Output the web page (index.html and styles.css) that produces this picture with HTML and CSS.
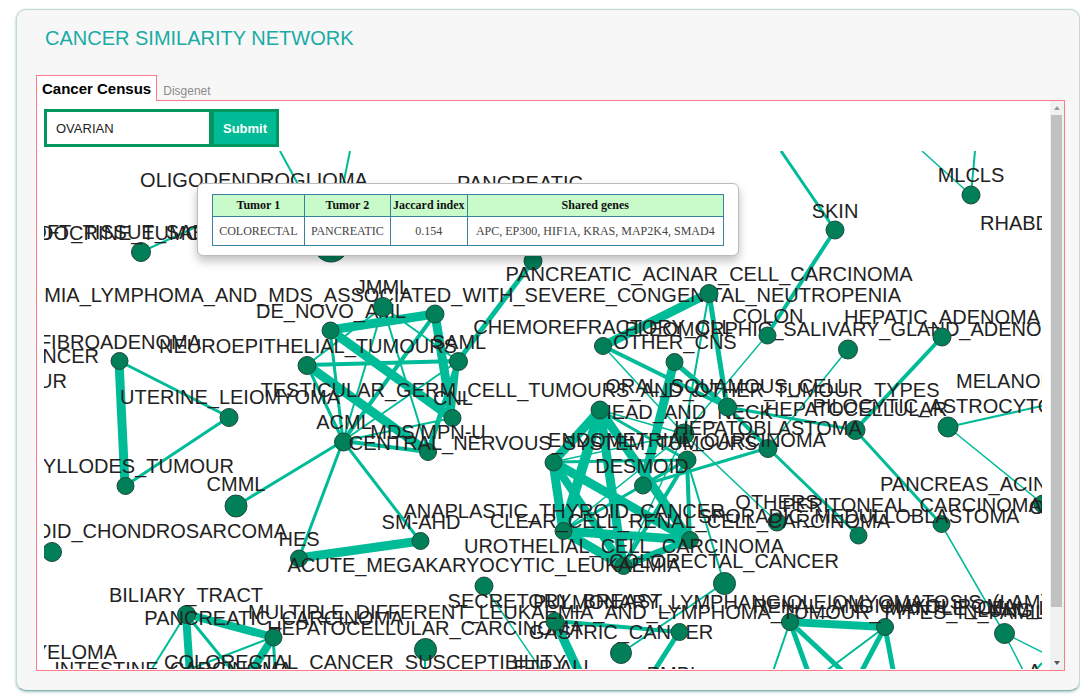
FILE: index.html
```html
<!DOCTYPE html>
<html lang="en">
<head>
    <meta charset="UTF-8">
    <meta name="viewport" content="width=device-width, initial-scale=1.0">
    <title>Cancer Similarity Network</title>
    <link rel="stylesheet" href="styles.css">
</head>
<body>
    <div class="card">
        <h1>CANCER SIMILARITY NETWORK</h1>

        <div class="tabs">
            <button type="button" class="tab active">Cancer Census</button>
            <button type="button" class="tab">Disgenet</button>
        </div>

        <div class="panel">
            <div class="panel-scroll">
                <form class="search">
                    <input type="text" name="tumor" value="OVARIAN" aria-label="Tumor">
                    <button type="submit">Submit</button>
                </form>
                <svg class="network" viewBox="44 151 998 518" preserveAspectRatio="xMinYMin slice">
                    <g id="edges"></g>
                    <g id="labelsBack"></g>
                    <g id="nodes"></g>
                    <g id="labels"></g>
                </svg>
            </div>

            <div class="scrollbar">
                <span class="arrow up"></span>
                <span class="track"><span class="thumb"></span></span>
                <span class="arrow down"></span>
            </div>

            <div class="tooltip">
                <table>
                    <thead>
                        <tr><th>Tumor 1</th><th>Tumor 2</th><th>Jaccard index</th><th>Shared genes</th></tr>
                    </thead>
                    <tbody>
                        <tr><td>COLORECTAL</td><td>PANCREATIC</td><td>0.154</td><td>APC, EP300, HIF1A, KRAS, MAP2K4, SMAD4</td></tr>
                    </tbody>
                </table>
            </div>
        </div>
    </div>

    <script src="network.js"></script>
</body>
</html>
```
FILE: styles.css
```css
* {
    box-sizing: border-box;
}

body {
    margin: 0;
    padding: 9px 0 6px 16px;
    background: #fff;
    font-family: "Liberation Sans", Arial, sans-serif;
    overflow: hidden;
}

.card {
    padding: 18px 14px 19px 19px;
    background: #f7f7f7;
    border: 1px solid #c3dad6;
    border-bottom-color: #86b3b0;
    border-radius: 10px;
    box-shadow: 0 1px 3px rgba(0, 110, 110, 0.4);
}

h1 {
    margin: 0 0 27px 9px;
    font-size: 20px;
    line-height: 20px;
    font-weight: normal;
    color: #1aaba5;
}

.tabs {
    display: flex;
    align-items: flex-end;
    position: relative;
    z-index: 1;
    margin-bottom: -1px;
}

.tab {
    height: 26px;
    padding: 4px 5px 0;
    border: 1px solid transparent;
    border-bottom: none;
    background: none;
    font-family: inherit;
    font-size: 12px;
    color: #8c8c8c;
    cursor: pointer;
}

.tab.active {
    padding: 0 5px;
    background: #fff;
    border-color: #ff7a88;
    font-size: 15px;
    font-weight: bold;
    color: #000;
}

.panel {
    position: relative;
    display: flex;
    background: #fff;
    border: 1px solid #ff7a88;
}

.panel-scroll {
    flex: 1;
    height: calc(100vh - 127px);
    min-width: 0;
    padding: 8px 8px 0 7px;
    overflow: hidden;
}

.search {
    display: flex;
    margin-bottom: 4px;
}

.search input,
.search button {
    height: 38px;
    border: 3px solid #00965f;
    font-family: inherit;
    font-size: 13px;
}

.search input {
    width: 167px;
    padding: 0 9px;
    border-right-width: 2px;
    background: #fff;
    color: #222;
}

.search button {
    padding: 0 9px;
    background: #00bb95;
    font-weight: bold;
    color: #fff;
    cursor: pointer;
}

.network {
    display: block;
    width: 100%;
    height: calc(100vh - 178px);
}

.network line {
    stroke: #00bb98;
}

.network circle {
    fill: #007f58;
    stroke: #1d4a3a;
    stroke-width: 1;
}

.network text {
    font-size: 20px;
    fill: #222;
}

.scrollbar {
    display: flex;
    flex-direction: column;
    width: 14px;
    padding: 0 2px 0 1px;
    background: #f0f2f1;
}

.track {
    flex: 1;
}

.thumb {
    display: block;
    height: 91%;
    background: #bfc2c0;
}

.arrow {
    height: 14px;
    display: flex;
    align-items: center;
    justify-content: center;
}

.arrow::before {
    content: "";
    border: 3px solid transparent;
}

.arrow.up::before {
    border-top-width: 0;
    border-bottom: 4px solid #999;
}

.arrow.down::before {
    border-bottom-width: 0;
    border-top: 4px solid #555;
}

.tooltip {
    position: absolute;
    top: 82px;
    left: 160px;
    padding: 10px 14px 9px;
    background: #fff;
    border: 1px solid #bbb;
    border-radius: 6px;
    box-shadow: 0 5px 10px rgba(0, 0, 0, 0.25);
}

.tooltip table {
    width: 512px;
    border-collapse: collapse;
    font-family: "Liberation Serif", "Times New Roman", serif;
    font-size: 12px;
    text-align: center;
    white-space: nowrap;
}

.tooltip th,
.tooltip td {
    border: 1px solid #3a80a0;
}

.tooltip th {
    height: 22px;
    padding: 0 1px;
    background: #c8fbc9;
    color: #111;
}

.tooltip td {
    height: 29px;
    padding: 0 5px;
    color: #444;
}
```
FILE: network.js
```js
const SVG = 'http://www.w3.org/2000/svg';

// x, y, radius
const nodes = [
    [971, 195, 9], [835, 230, 9], [141, 252, 9.5], [331, 245, 17], [533, 261, 9],
    [383, 307, 9.5], [435, 314, 9], [330.5, 330.5, 8.5], [307, 365.5, 9], [458.5, 361.5, 9],
    [452.5, 418, 8.5], [428, 452, 8.5], [343.5, 442, 9], [119.5, 361, 8.5], [229, 417.5, 9],
    [125.5, 486, 8.5], [236, 506, 11], [52, 552, 9.5], [299, 558.5, 8.5], [420.5, 541, 8.5],
    [709, 293.5, 9], [603, 346, 8.5], [767.5, 335.5, 8.5], [848, 349.5, 9.5], [942, 337, 9],
    [674.5, 362, 8.5], [600, 410, 9], [727.5, 407, 9], [684, 434, 10], [687, 460, 9],
    [768, 448.5, 9], [553.5, 462.5, 8.5], [643, 485.5, 8.5], [563.5, 531, 8.5], [690, 540, 8.5],
    [623.5, 566, 8.5], [855.5, 430, 9.5], [948, 427, 10], [777, 522, 9], [858.5, 535.5, 8.5],
    [941.5, 524, 8.5], [1043, 504, 9], [484, 586, 9], [186.5, 614.5, 9], [273.5, 637.5, 8.5],
    [425.5, 649.5, 11], [555, 621.5, 9], [679.5, 632, 8.5], [621, 653, 10.5], [724.5, 583.5, 11],
    [790, 622, 8.5], [885, 627, 8.5], [1004.5, 633.5, 10]
];

// x1, y1, x2, y2, width
const edges = [
    [280, 151, 331, 245, 2], [350, 151, 331, 245, 2], [141, 252, 240, 207, 2],
    [781, 151, 835, 230, 3], [835, 230, 767, 335, 4], [922, 151, 971, 195, 1.5],
    [975, 151, 971, 195, 2], [767, 335, 684, 434, 1.5], [533, 261, 458, 361, 5],
    [709, 293, 603, 346, 9], [709, 293, 727, 407, 5], [709, 293, 684, 434, 2],
    [603, 346, 727, 407, 4], [603, 346, 684, 434, 1.5], [674, 362, 727, 407, 5],
    [674, 362, 643, 485, 9], [727, 407, 768, 448, 4], [727, 407, 855, 430, 3],
    [855, 430, 942, 337, 4], [855, 430, 941, 524, 3], [848, 349, 768, 448, 1.5],
    [768, 448, 859, 536, 3], [768, 448, 643, 485, 3], [948, 427, 1042, 406, 2],
    [948, 427, 1043, 504, 1.5], [941, 524, 1004, 633, 1.5], [684, 434, 777, 522, 1.5],
    [600, 410, 553, 462, 9], [600, 410, 563, 531, 10], [600, 410, 623, 566, 9],
    [600, 410, 690, 540, 9], [600, 410, 687, 460, 3], [600, 410, 684, 434, 1.5],
    [553, 462, 563, 531, 9], [553, 462, 623, 566, 8], [553, 462, 690, 540, 9],
    [553, 462, 687, 460, 3], [553, 462, 684, 434, 1.5], [563, 531, 690, 540, 9],
    [563, 531, 623, 566, 9], [690, 540, 623, 566, 7], [563, 531, 687, 460, 3],
    [563, 531, 684, 434, 1.5], [687, 460, 690, 540, 4], [687, 460, 623, 566, 4],
    [684, 434, 623, 566, 1.5], [687, 460, 643, 485, 3], [687, 460, 724, 583, 2],
    [724, 583, 621, 653, 2], [679, 632, 555, 621, 4], [679, 632, 640, 693, 5],
    [555, 621, 592, 700, 9], [484, 586, 548, 680, 1.5], [425, 649, 425, 680, 2],
    [330, 330, 435, 314, 9], [435, 314, 452, 418, 9], [330, 330, 452, 418, 9],
    [307, 365, 428, 452, 9], [307, 365, 458, 361, 4], [435, 314, 343, 441, 4],
    [383, 307, 343, 441, 2], [383, 307, 428, 452, 2], [383, 307, 458, 361, 2],
    [383, 307, 307, 365, 2], [330, 330, 343, 441, 3], [307, 365, 343, 441, 3],
    [458, 361, 343, 441, 2], [452, 418, 343, 441, 2], [428, 452, 343, 441, 4],
    [458, 361, 428, 452, 5], [458, 361, 452, 418, 4], [343, 441, 236, 506, 3],
    [343, 441, 299, 558, 3], [343, 441, 420, 541, 3], [299, 558, 420, 541, 9],
    [119, 361, 229, 417, 3], [119, 361, 125, 486, 9], [229, 417, 125, 486, 3],
    [186, 614, 273, 637, 8], [186, 614, 191, 690, 8], [186, 614, 145, 680, 2],
    [186, 614, 240, 680, 3], [273, 637, 190, 669, 2], [273, 637, 240, 690, 8],
    [273, 637, 276, 680, 3], [790, 622, 885, 627, 8], [790, 622, 770, 680, 2],
    [790, 622, 811, 680, 5], [790, 622, 852, 680, 5], [885, 627, 822, 674, 2],
    [885, 627, 857, 680, 5], [885, 627, 895, 680, 5], [1004, 633, 1042, 652, 1.5],
    [1004, 633, 1028, 680, 1.5], [1034, 672, 1042, 663, 2]
];

// x, baseline, text, anchor (middle when left out)
const labelsBack = [
    [901, 302, 'LEUKAEMIA_LYMPHOMA_AND_MDS_ASSOCIATED_WITH_SEVERE_CONGENITAL_NEUTROPENIA', 'end'],
    [331, 318, 'DE_NOVO_AML'],
    [848, 336, 'PLEOMORPHIC_SALIVARY_GLAND_ADENOMA'],
    [685, 419, 'HEAD_AND_NECK'],
    [425, 635, 'HEPATOCELLULAR_CARCINOMA'],
    [621, 639, 'GASTRIC_CANCER']
];

const labels = [
    [254, 187, 'OLIGODENDROGLIOMA'],
    [520, 190, 'PANCREATIC'],
    [18, 239, 'SOFT_TISSUE_SARCOMA', 'start'],
    [-61, 240, 'NEUROENDOCRINE_TUMOUR', 'start'],
    [383, 294, 'JMML'],
    [120, 349, 'FIBROADENOMA'],
    [308, 353, 'NEUROEPITHELIAL_TUMOURS'],
    [99, 363, 'BREAST_CANCER', 'end'],
    [67, 388, 'TUMOUR', 'end'],
    [230, 404, 'UTERINE_LEIOMYOMA'],
    [600, 397, 'TESTICULAR_GERM_CELL_TUMOURS_AND_OTHER_TUMOUR_TYPES'],
    [234, 473, 'PHYLLODES_TUMOUR', 'end'],
    [236, 491, 'CMML'],
    [287, 538, 'MYXOID_CHONDROSARCOMA', 'end'],
    [299, 546, 'HES'],
    [484, 572, 'ACUTE_MEGAKARYOCYTIC_LEUKAEMIA'],
    [186, 602, 'BILIARY_TRACT'],
    [274, 625, 'PANCREATIC_CARCINOMA'],
    [248, 619, 'MULTIPLE_DIFFERENT_LEUKAEMIA_AND_LYMPHOMA_TUMOUR_TYPES_IN_FAMILY', 'start'],
    [365, 669, 'COLORECTAL_CANCER_SUSCEPTIBILITY'],
    [117, 659, 'MYELOMA', 'end'],
    [292, 676, 'LARGE_INTESTINE_CARCINOMA', 'end'],
    [553, 450, 'CENTRAL_NERVOUS_SYSTEM_TUMOURS'],
    [344, 429, 'ACML'],
    [428, 439, 'MDS/MPN-U'],
    [459, 349, 'SAML'],
    [453, 405, 'CNL'],
    [421, 529, 'SM-AHD'],
    [564, 518, 'ANAPLASTIC_THYROID_CANCER'],
    [690, 528, 'CLEAR_CELL_RENAL_CELL_CARCINOMA'],
    [624, 553, 'UROTHELIAL_CELL_CARCINOMA'],
    [724, 568, 'COLORECTAL_CANCER'],
    [555, 608, 'SECRETORY_BREAST'],
    [533, 609, 'PULMONARY_LYMPHANGIOLEIOMYOMATOSIS_(LAM)', 'start'],
    [554, 674, 'ETP-ALL'],
    [674, 681, 'PMBL'],
    [709, 281, 'PANCREATIC_ACINAR_CELL_CARCINOMA'],
    [603, 334, 'CHEMOREFRACTORY_CLL'],
    [675, 349, 'OTHER_CNS'],
    [768, 323, 'COLON'],
    [942, 324, 'HEPATIC_ADENOMA'],
    [835, 218, 'SKIN'],
    [971, 182, 'MLCLS'],
    [980, 230, 'RHABDOMYOSARCOMA', 'start'],
    [727, 393, 'ORAL_SQUAMOUS_CELL'],
    [856, 416, 'HEPATOCELLULAR'],
    [948, 413, 'PILOCYTIC_ASTROCYTOMA'],
    [956, 388, 'MELANOMA', 'start'],
    [768, 435, 'HEPATOBLASTOMA'],
    [687, 447, 'ENDOMETRIAL_CARCINOMA'],
    [642, 473, 'DESMOID'],
    [777, 509, 'OTHERS'],
    [912, 512, 'PERITONEAL_CARCINOMA'],
    [859, 523, 'SPORADIC_MEDULLOBLASTOMA'],
    [880, 491, 'PANCREAS_ACINAR', 'start'],
    [1029, 514, 'OVARY', 'start'],
    [753, 613, 'RENAL_ANGIOMYOLIPOMA', 'start'],
    [885, 615, 'MANTLE_CELL_LYMPHOMA', 'start'],
    [1005, 617, 'LUNG'],
    [1028, 678, 'ALL', 'start']
];

function add(parentId, tag, attrs, text) {
    const el = document.createElementNS(SVG, tag);
    for (const name in attrs) {
        el.setAttribute(name, attrs[name]);
    }
    if (text) {
        el.textContent = text;
    }
    document.getElementById(parentId).appendChild(el);
}

function drawLabels(parentId, list) {
    list.forEach(([x, y, text, anchor]) => {
        add(parentId, 'text', { x, y, 'text-anchor': anchor || 'middle' }, text);
    });
}

edges.forEach(([x1, y1, x2, y2, width]) => {
    add('edges', 'line', { x1, y1, x2, y2, 'stroke-width': width });
});

nodes.forEach(([cx, cy, r]) => {
    add('nodes', 'circle', { cx, cy, r });
});

drawLabels('labelsBack', labelsBack);
drawLabels('labels', labels);
```
